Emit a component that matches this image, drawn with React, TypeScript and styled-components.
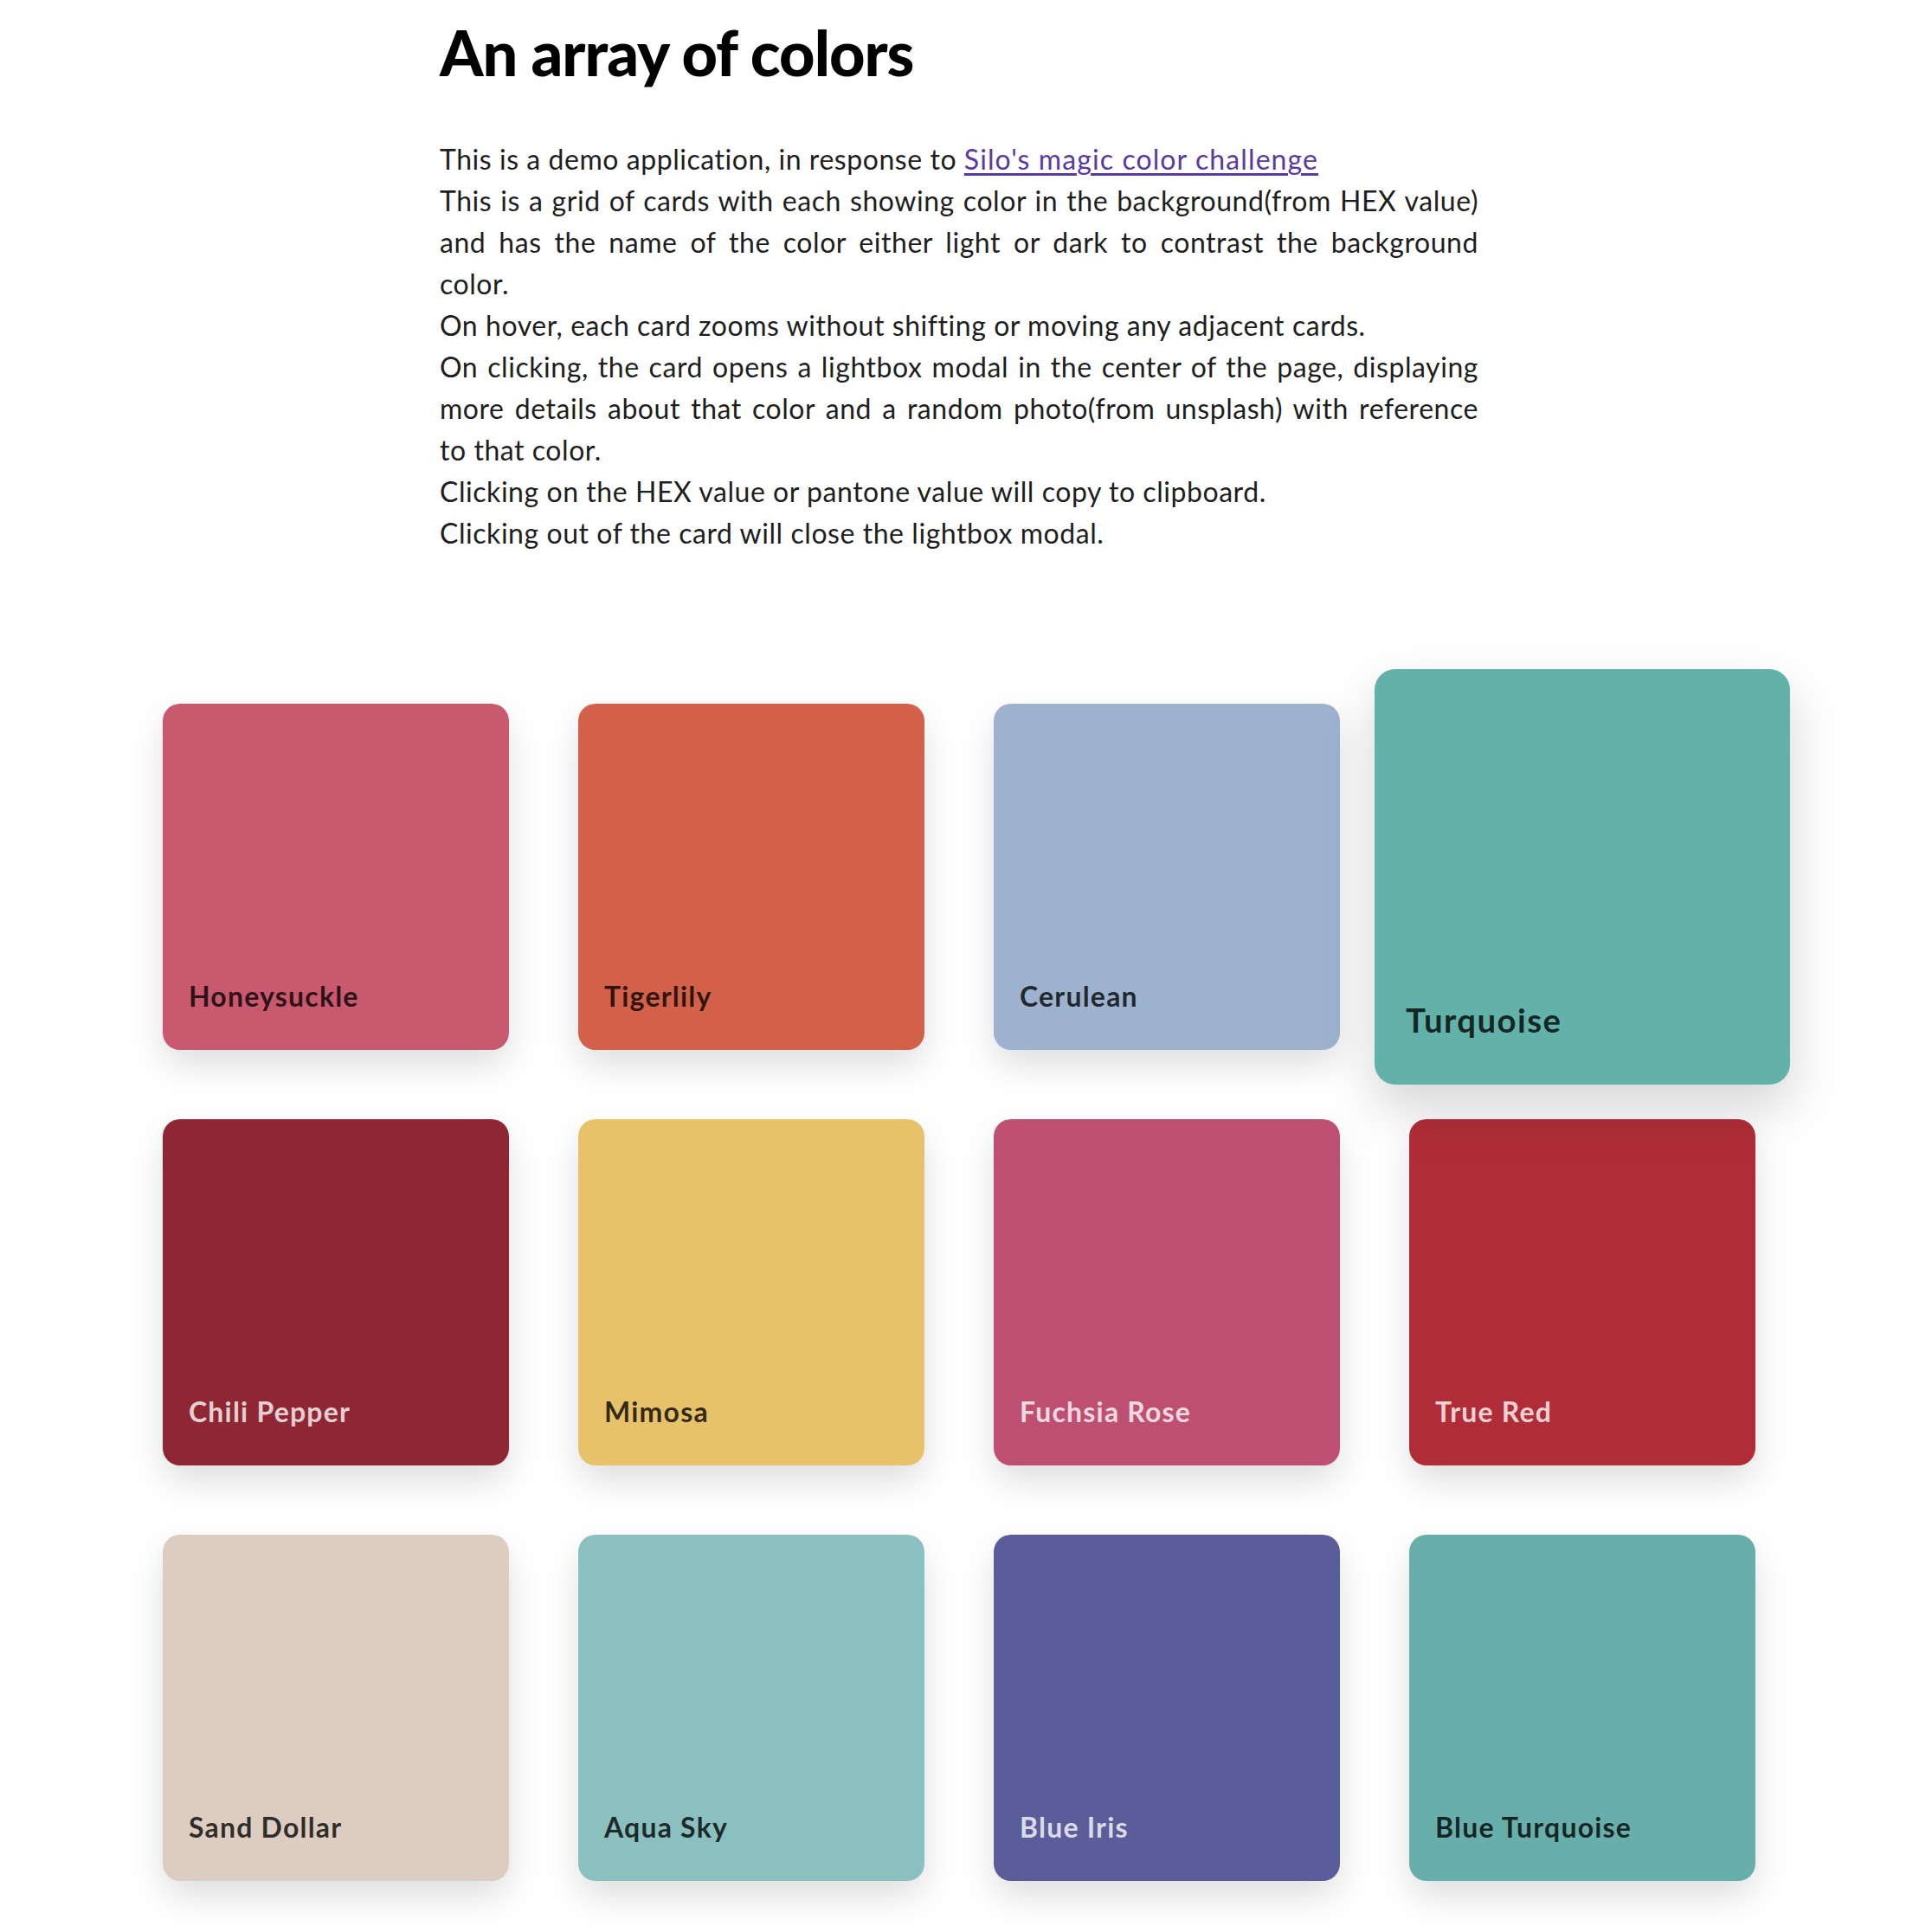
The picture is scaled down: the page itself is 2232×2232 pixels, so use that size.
import React from "react";
import styled, { createGlobalStyle } from "styled-components";

const GlobalStyle = createGlobalStyle`
  html, body {
    margin: 0;
    padding: 0;
    background: #ffffff;
    overflow: hidden;
  }
  body {
    font-family: Lato, "Noto Sans", "Liberation Sans", sans-serif;
    color: #1a1a1a;
  }
`;

const Page = styled.main`
  padding-right: 16px;
  padding-bottom: 60px;
`;

const Intro = styled.section`
  width: 1200px;
  margin: 0 auto;
`;

const Title = styled.h1`
  margin: 17px 0 0;
  font-size: 72px;
  line-height: 1.2;
  font-weight: 900;
  color: #000;
  letter-spacing: -1px;
`;

const Description = styled.div`
  margin-top: 57px;
  font-size: 32px;
  line-height: 48px;
  color: #1e1e1e;
  letter-spacing: 0.55px;
`;

const Line = styled.p`
  margin: 0;
  text-align: justify;
`;

const Link = styled.a`
  color: #5a3a9c;
  text-decoration: underline;
  text-underline-offset: 4px;
  letter-spacing: 1.1px;
`;

const Grid = styled.section`
  width: 1840px;
  margin: 173px auto 0;
  display: grid;
  grid-template-columns: repeat(4, 400px);
  gap: 80px;
`;

const Card = styled.div<{ $bg: string; $active?: boolean }>`
  position: relative;
  width: 400px;
  height: 400px;
  box-sizing: border-box;
  border-radius: 20px;
  background: ${(p) => p.$bg};
  display: flex;
  flex-direction: column;
  justify-content: flex-end;
  padding: 0 30px 43px;
  box-shadow: ${(p) =>
    p.$active
      ? "0 22px 50px rgba(0, 0, 0, 0.17)"
      : "0 18px 40px rgba(0, 0, 0, 0.13)"};
  transform: ${(p) => (p.$active ? "scale(1.2)" : "none")};
  z-index: ${(p) => (p.$active ? 2 : 1)};
`;

const Label = styled.span<{ $light?: boolean }>`
  font-size: 32px;
  line-height: 1.2;
  font-weight: 700;
  letter-spacing: 1.2px;
  color: ${(p) => (p.$light ? "rgba(255, 255, 255, 0.78)" : "rgba(0, 0, 0, 0.78)")};
`;

type ColorItem = { name: string; hex: string; light?: boolean; active?: boolean };

const colors: ColorItem[] = [
  { name: "Honeysuckle", hex: "#c9596f" },
  { name: "Tigerlily", hex: "#d3614a" },
  { name: "Cerulean", hex: "#9db2cf" },
  { name: "Turquoise", hex: "#62b2a9", active: true },
  { name: "Chili Pepper", hex: "#8e2733", light: true },
  { name: "Mimosa", hex: "#e8c16b" },
  { name: "Fuchsia Rose", hex: "#bc4f72", light: true },
  { name: "True Red", hex: "#b02d37", light: true },
  { name: "Sand Dollar", hex: "#dccdc0" },
  { name: "Aqua Sky", hex: "#8ac1c0" },
  { name: "Blue Iris", hex: "#5b5c9a", light: true },
  { name: "Blue Turquoise", hex: "#68aeaa" },
];

export default function App() {
  return (
    <>
      <GlobalStyle />
      <Page>
        <Intro>
          <Title>An array of colors</Title>
          <Description>
            <Line>
              This is a demo application, in response to{" "}
              <Link href="#">Silo's magic color challenge</Link>
            </Line>
            <Line>
              This is a grid of cards with each showing color in the background(from HEX value)
              and has the name of the color either light or dark to contrast the background
              color.
            </Line>
            <Line>On hover, each card zooms without shifting or moving any adjacent cards.</Line>
            <Line>
              On clicking, the card opens a lightbox modal in the center of the page, displaying
              more details about that color and a random photo(from unsplash) with reference to
              that color.
            </Line>
            <Line>Clicking on the HEX value or pantone value will copy to clipboard.</Line>
            <Line>Clicking out of the card will close the lightbox modal.</Line>
          </Description>
        </Intro>
        <Grid>
          {colors.map((c) => (
            <Card key={c.name} $bg={c.hex} $active={c.active}>
              <Label $light={c.light}>{c.name}</Label>
            </Card>
          ))}
        </Grid>
      </Page>
    </>
  );
}
